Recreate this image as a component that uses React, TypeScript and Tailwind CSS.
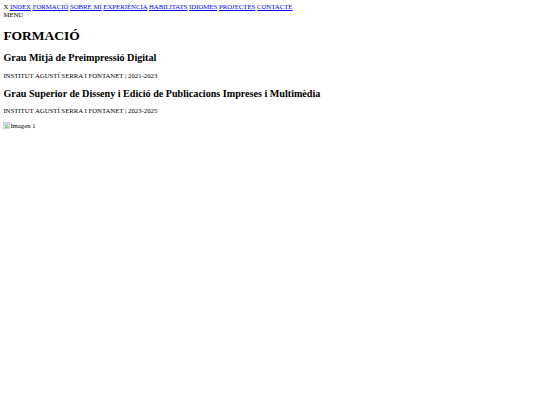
const links = ["INDEX", "FORMACIÓ", "SOBRE MI", "EXPERIÈNCIA", "HABILITATS", "IDIOMES", "PROJECTES", "CONTACTE"];

function Estudi({ titol, info }: { readonly titol: string; readonly info: string }) {
  return (
    <>
      <h2 className="text-[10.125px] font-bold leading-[11.6px] my-[8px]">{titol}</h2>
      <p className="my-[6.75px]">{info}</p>
    </>
  );
}

function ImatgeTrencada() {
  return (
    <svg width="7" height="7" viewBox="0 0 16 16" className="inline-block align-[-1px]">
      <rect x="1" y="1" width="14" height="14" fill="#f5f5f5" stroke="#b0b0b0" strokeWidth="1.2" />
      <rect x="3" y="3" width="10" height="6" fill="#b5d3ee" />
      <path d="M3 13 L7 8 L10 11 L13 9 L13 13 Z" fill="#6bbf6e" />
    </svg>
  );
}

export default function App() {
  return (
    <div className="min-h-[405px] bg-white text-black font-['Liberation_Serif',serif] text-[6.75px] leading-[7.76px] p-[3.375px]">
      <nav>
        <div>
          X{" "}
          {links.map((l, i) => (
            <span key={l}>
              <a href="#" className="text-[#0000ee] underline">{l}</a>
              {i < links.length - 1 ? " " : ""}
            </span>
          ))}
        </div>
        <div>MENU</div>
      </nav>
      <section>
        <h1 className="text-[13.5px] font-bold leading-[15.5px] my-[9px]">FORMACIÓ</h1>
        <Estudi titol="Grau Mitjà de Preimpressió Digital" info="INSTITUT AGUSTÍ SERRA I FONTANET | 2021-2023" />
        <Estudi titol="Grau Superior de Disseny i Edició de Publicacions Impreses i Multimèdia" info="INSTITUT AGUSTÍ SERRA I FONTANET | 2023-2025" />
        <div>
          <ImatgeTrencada />
          <span>Imagen 1</span>
        </div>
      </section>
    </div>
  );
}
